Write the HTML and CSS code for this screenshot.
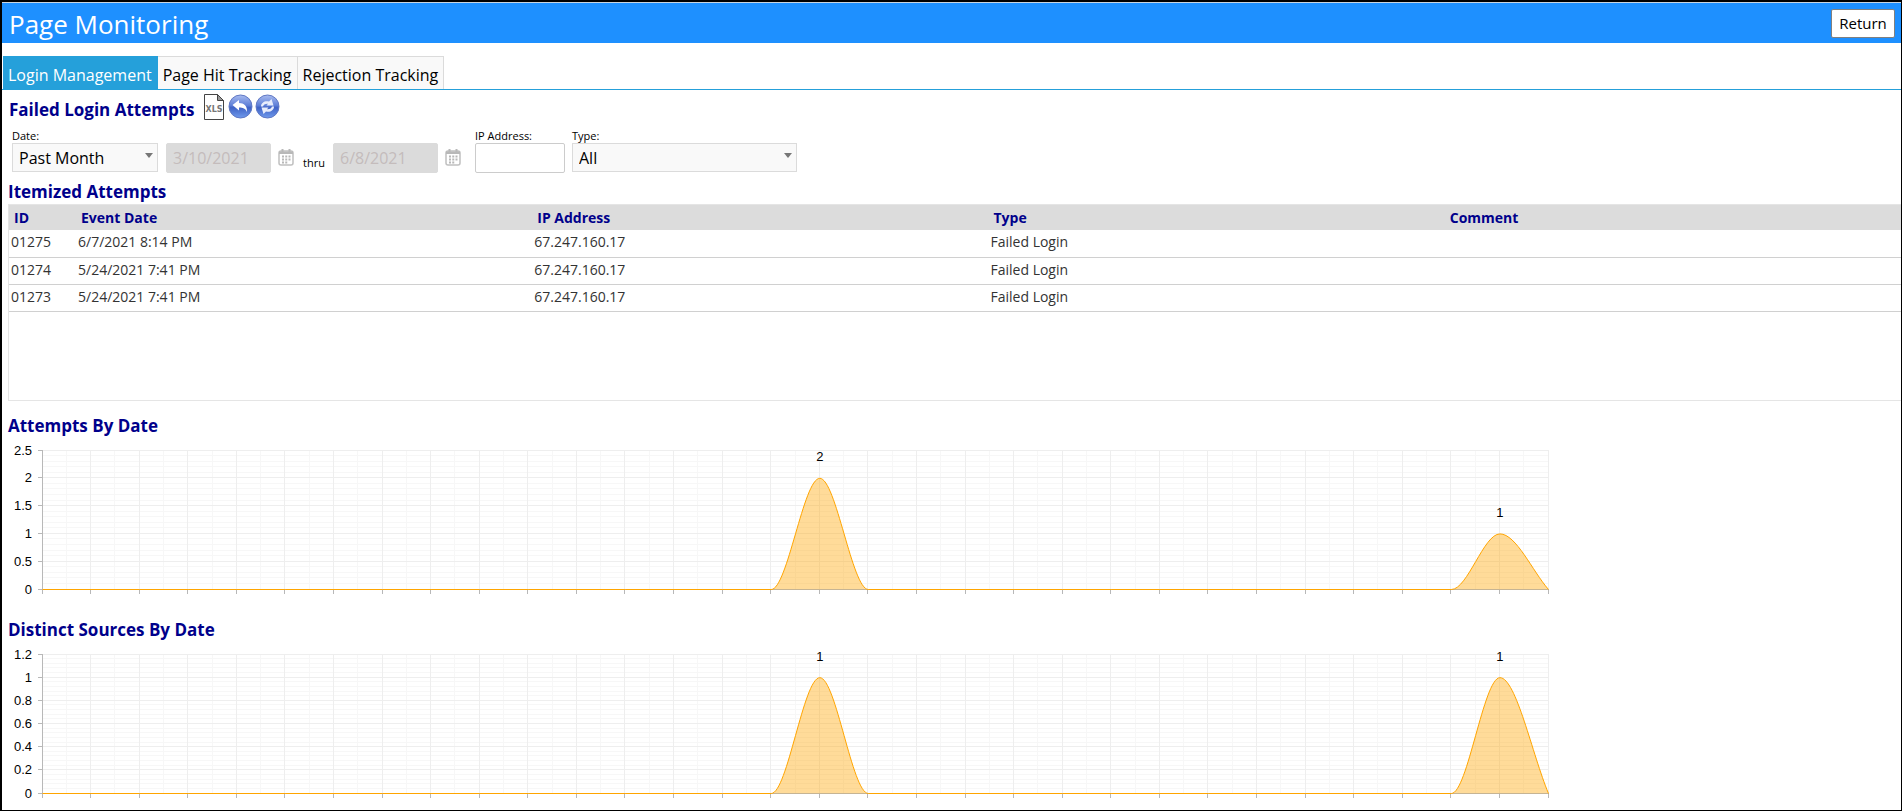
FILE: index.html
```html
<!DOCTYPE html>
<html lang="en">
<head>
  <meta charset="UTF-8">
  <title>Page Monitoring</title>
  <meta name="viewport" content="width=device-width, initial-scale=1.0">
  <link rel="stylesheet" href="styles.css">
</head>
<body>

  <header class="title-bar">
    <h1>Page Monitoring</h1>
    <button type="button" class="return-btn">Return</button>
  </header>

  <nav class="tabs">
    <a href="#login" class="tab active">Login Management</a>
    <a href="#hits" class="tab">Page Hit Tracking</a>
    <a href="#rejections" class="tab">Rejection Tracking</a>
  </nav>

  <main class="content">
    <div class="section-title">
      <h2>Failed Login Attempts</h2>
      <button type="button" class="icon-btn xls" aria-label="Export to Excel">
        <svg width="20" height="26" viewBox="0 0 20 26">
          <path d="M.5 .5H13.500L19.500 6.500V25.500H.5Z" fill="#fff" stroke="#444"/>
          <path d="M13.500 .5V6.500H19.500Z" fill="#999" stroke="#444"/>
          <text x="10" y="18" text-anchor="middle" class="xls-text">XLS</text>
        </svg>
      </button>
      <button type="button" class="icon-btn" aria-label="Undo">
        <svg width="25" height="25" viewBox="0 0 25 25">
          <defs>
            <linearGradient id="ball" x1="0" y1="0" x2="0" y2="1">
              <stop offset="0" stop-color="#a9bcf0"/>
              <stop offset=".45" stop-color="#5f80d8"/>
              <stop offset=".55" stop-color="#4063c6"/>
              <stop offset="1" stop-color="#6f9aec"/>
            </linearGradient>
          </defs>
          <circle cx="12.500" cy="12.500" r="11.500" fill="url(#ball)" stroke="#6078c4"/>
          <path d="M4.500 11L11 6V9C16 9 19.500 12 19 18C17.500 14.500 15 13.500 11 13.500V16.500Z" fill="#fff"/>
        </svg>
      </button>
      <button type="button" class="icon-btn" aria-label="Refresh">
        <svg width="25" height="25" viewBox="0 0 25 25">
          <circle cx="12.500" cy="12.500" r="11.500" fill="url(#ball)" stroke="#6078c4"/>
          <path d="M6 12.500C6 8.500 10 6.500 14 7.500L16.500 5L18.500 11.500H11.500L13 9.800C10 9.500 8.500 11 8 12.500Z" fill="#e8edfc"/>
          <path d="M19 12.500C19 16.500 15 18.500 11 17.500L8.500 20L6.500 13.500H13.500L12 15.200C15 15.500 16.500 14 17 12.500Z" fill="#e8edfc"/>
        </svg>
      </button>
    </div>

    <form class="filters">
      <div class="field date-range">
        <label for="range">Date:</label>
        <div class="select-wrap">
          <select id="range"><option>Past Month</option></select>
        </div>
      </div>
      <input type="text" class="date-box" value="3/10/2021" aria-label="Start date" disabled>
      <svg class="calendar" width="16" height="17" viewBox="0 0 16 17">
        <rect x="1" y="2" width="14" height="14" rx="2" fill="#fff" stroke="#c0c0c0" stroke-width="1.500"/>
        <path d="M1 2.500H15V5H1ZM3.500 0H5.500V3H3.500ZM10.500 0H12.500V3H10.500Z" fill="#b8b8b8"/>
        <path d="M4 7.500H12.500M4 10.500H12.500M4 13.500H9.500" stroke="#b8b8b8" stroke-width="2" stroke-dasharray="2 1.250"/>
      </svg>
      <span class="thru">thru</span>
      <input type="text" class="date-box" value="6/8/2021" aria-label="End date" disabled>
      <svg class="calendar" width="16" height="17" viewBox="0 0 16 17">
        <rect x="1" y="2" width="14" height="14" rx="2" fill="#fff" stroke="#c0c0c0" stroke-width="1.500"/>
        <path d="M1 2.500H15V5H1ZM3.500 0H5.500V3H3.500ZM10.500 0H12.500V3H10.500Z" fill="#b8b8b8"/>
        <path d="M4 7.500H12.500M4 10.500H12.500M4 13.500H9.500" stroke="#b8b8b8" stroke-width="2" stroke-dasharray="2 1.250"/>
      </svg>
      <div class="field ip-field">
        <label for="ip">IP Address:</label>
        <input type="text" id="ip" class="text-box">
      </div>
      <div class="field type-field">
        <label for="type">Type:</label>
        <div class="select-wrap">
          <select id="type"><option>All</option></select>
        </div>
      </div>
    </form>

    <h2>Itemized Attempts</h2>
    <div class="grid">
      <table>
        <colgroup>
          <col class="id-col">
          <col><col><col><col>
        </colgroup>
        <thead>
          <tr><th>ID</th><th>Event Date</th><th>IP Address</th><th>Type</th><th>Comment</th></tr>
        </thead>
        <tbody>
          <tr><td>01275</td><td>6/7/2021 8:14 PM</td><td>67.247.160.17</td><td>Failed Login</td><td></td></tr>
          <tr><td>01274</td><td>5/24/2021 7:41 PM</td><td>67.247.160.17</td><td>Failed Login</td><td></td></tr>
          <tr><td>01273</td><td>5/24/2021 7:41 PM</td><td>67.247.160.17</td><td>Failed Login</td><td></td></tr>
        </tbody>
      </table>
    </div>

    <h2>Attempts By Date</h2>
    <svg class="chart" id="attemptsChart" viewBox="0 0 1560 160"></svg>

    <h2>Distinct Sources By Date</h2>
    <svg class="chart" id="sourcesChart" viewBox="0 0 1560 160"></svg>
  </main>

  <script src="charts.js"></script>
</body>
</html>
```
FILE: styles.css
```css
* {
  box-sizing: border-box;
}
body {
  margin: 0;
  min-height: 100vh;
  border: 1px solid #000;
  border-width: 2px 1px 1px 2px;
  background-color: #fff;
  font-family: "Segoe UI", "Open Sans", "Noto Sans", sans-serif;
  color: #000;
}
h1, h2 {
  margin: 0;
}
.title-bar {
  display: flex;
  align-items: center;
  justify-content: space-between;
  height: 41px;
  padding: 0 6px 0 7px;
  border-top: 1px solid #c8d4e0;
  background-color: #1e90ff;
}
h1 {
  padding-top: 2px;
  color: #fff;
  font-size: 26px;
  font-weight: 400;
  line-height: 38px;
}
.return-btn {
  width: 64px;
  height: 29px;
  padding: 0;
  border: 1px solid #808080;
  border-radius: 2px;
  background-color: #fff;
  font-family: inherit;
  font-size: 15px;
  color: #000;
}
.tabs {
  display: flex;
  margin-top: 13px;
  padding-left: 1px;
  border-bottom: 1px solid #25a0da;
}
.tab {
  height: 33px;
  padding: 4px 5px 0;
  border: 1px solid #dbdbdb;
  border-width: 1px 1px 0 0;
  background-color: #f9f9f9;
  font-size: 16px;
  line-height: 28px;
  color: #000;
  text-decoration: none;
}
.tab.active {
  border-color: #25a0da;
  background-color: #25a0da;
  color: #fff;
}
.content {
  padding-left: 6px;
}
h2 {
  padding-top: 1px;
  color: #00008b;
  font-size: 17px;
  font-weight: 700;
  line-height: 24px;
}
.section-title {
  display: flex;
  align-items: center;
  height: 38px;
  padding-left: 1px;
}
.icon-btn {
  display: block;
  margin: 0 0 5px 2px;
  padding: 0;
  border: 0;
  background: none;
}
.icon-btn.xls {
  margin: 0 2px 5px 9px;
}
.icon-btn svg {
  display: block;
}
.xls-text {
  font-family: "DejaVu Sans", sans-serif;
  font-size: 8px;
  font-weight: 700;
  fill: #777;
}
.filters {
  display: flex;
  align-items: flex-end;
  height: 45px;
  padding-left: 4px;
}
.field label {
  display: block;
  font-size: 11px;
  line-height: 15px;
}
.select-wrap {
  position: relative;
  margin-bottom: 1px;
}
.select-wrap::after {
  content: "";
  position: absolute;
  top: 10px;
  right: 5px;
  border: 4px solid transparent;
  border-top: 5px solid #777;
  border-bottom: 0;
  pointer-events: none;
}
select {
  display: block;
  width: 100%;
  height: 29px;
  padding: 0 6px;
  border: 1px solid #dbdbdb;
  border-radius: 0;
  background-color: #f9f9f9;
  font-family: inherit;
  font-size: 16px;
  color: #000;
  appearance: none;
}
.date-range {
  width: 146px;
  margin-right: 8px;
}
.date-box, .text-box {
  display: block;
  height: 30px;
  padding: 0 6px;
  border: 1px solid #ccc;
  border-radius: 2px;
  font-family: inherit;
  font-size: 16px;
}
.date-box {
  width: 105px;
  border-color: #dbdbdb;
  background-color: #dbdbdb;
  color: #c4bcbc;
}
.calendar {
  margin: 0 9px 7px 7px;
}
.thru {
  width: 30px;
  font-size: 11px;
  line-height: 20px;
}
.ip-field {
  width: 90px;
  margin-left: 5px;
}
.text-box {
  width: 100%;
}
.type-field {
  width: 225px;
  margin-left: 7px;
}
.filters + h2 {
  margin-top: 6px;
}
.grid {
  min-height: 197px;
  margin-bottom: 12px;
  border: 1px solid #e5e5e5;
  border-right: 0;
}
table {
  width: 100%;
  border-collapse: collapse;
  table-layout: fixed;
}
.id-col {
  width: 67px;
}
th {
  height: 25px;
  padding: 0 5px;
  background-color: #dcdcdc;
  color: #00008b;
  font-size: 14px;
  line-height: 20px;
  text-align: left;
}
td {
  height: 27px;
  padding: 0 2px 2px;
  border-bottom: 1px solid #d0d0d0;
  color: #333;
  font-size: 14px;
  line-height: 20px;
}
.chart {
  display: block;
  width: 1560px;
  max-width: 100%;
  margin-bottom: 19px;
  font-family: Arial, "Liberation Sans", sans-serif;
  font-size: 13px;
}
.chart:last-child {
  margin-bottom: 0;
}
.chart .minor {
  stroke: #f7f7f7;
}
.chart .major {
  stroke: #eee;
}
.chart .axis {
  stroke: #b8b8b8;
}
.chart .area {
  fill: #ffa500;
  fill-opacity: 0.4;
}
.chart .line {
  fill: none;
  stroke: #ffa500;
}
```
FILE: charts.js
```javascript
const LEFT = 34, RIGHT = 1540, TOP = 12, BOTTOM = 151;
const DAYS = 31;

function line(x1, y1, x2, y2, cls) {
  return `<line x1="${x1}" y1="${y1}" x2="${x2}" y2="${y2}" class="${cls}"/>`;
}

// keep 1px lines crisp
function snap(v) {
  return Math.floor(v) + 0.5;
}

function drawChart(id, max, step, values) {
  const dayWidth = (RIGHT - LEFT) / DAYS;
  const rows = Math.round(max / step);
  const rowHeight = (BOTTOM - TOP) / rows;
  const xAt = i => LEFT + 0.5 + i * dayWidth;
  const yAt = v => BOTTOM + 0.5 - v / max * (BOTTOM - TOP);
  let minor = "", major = "", axis = "", labels = "";

  for (let i = 0; i <= rows * 5; i++) {
    const y = snap(BOTTOM - i * rowHeight / 5);
    if (i % 5) {
      minor += line(LEFT, y, RIGHT, y, "minor");
    } else {
      major += line(LEFT, y, RIGHT, y, "major");
      axis += line(LEFT - 4, y, LEFT, y, "axis");
      const text = Number((i / 5 * step).toFixed(1));
      labels += `<text x="24" y="${y + 4}" text-anchor="end">${text}</text>`;
    }
  }
  for (let i = 0; i <= DAYS * 2; i++) {
    const x = snap(LEFT + i * dayWidth / 2);
    if (i % 2) {
      minor += line(x, TOP, x, BOTTOM, "minor");
    } else {
      major += line(x, TOP, x, BOTTOM, "major");
      axis += line(x, BOTTOM, x, BOTTOM + 5, "axis");
    }
  }
  axis += line(LEFT + 0.5, TOP, LEFT + 0.5, BOTTOM, "axis");
  axis += line(LEFT, BOTTOM + 0.5, RIGHT, BOTTOM + 0.5, "axis");

  // smooth curve, flat at every point except the last one
  let path = `M${xAt(0)} ${yAt(0)}`;
  for (let i = 1; i <= DAYS; i++) {
    const from = values[i - 1] || 0;
    const to = values[i] || 0;
    const lead = i === DAYS ? to + (from - to) / 3 : to;
    path += ` C${xAt(i - 1) + dayWidth / 3} ${yAt(from)} ${xAt(i) - dayWidth / 3} ${yAt(lead)} ${xAt(i)} ${yAt(to)}`;
    if (to) {
      labels += `<text x="${xAt(i)}" y="${yAt(to) - 17}" text-anchor="middle">${to}</text>`;
    }
  }

  document.getElementById(id).innerHTML = minor + major + axis +
    `<path d="${path}Z" class="area"/><path d="${path}" class="line"/>` + labels;
}

drawChart("attemptsChart", 2.5, 0.5, { 16: 2, 30: 1 });
drawChart("sourcesChart", 1.2, 0.2, { 16: 1, 30: 1 });
```
